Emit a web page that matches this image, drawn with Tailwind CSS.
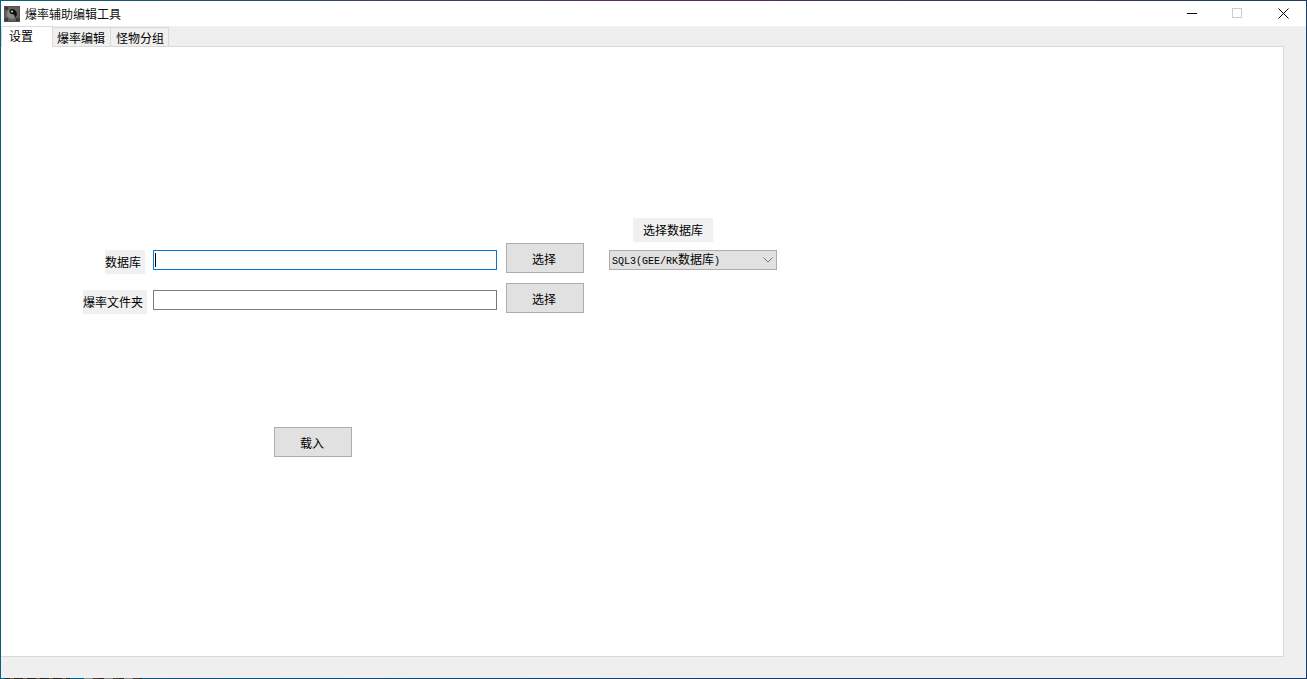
<!DOCTYPE html>
<html lang="zh-CN">
<head>
    <meta charset="UTF-8">
    <title>爆率辅助编辑工具</title>
    <script src="https://cdn.jsdelivr.net/npm/@tailwindcss/browser@4"></script>
</head>
<body class="w-[1307px] h-[679px] overflow-hidden">
    <!-- Window frame -->
    <div class="w-full h-full p-px relative bg-[linear-gradient(90deg,#0b5f7a,#1d3b63_50%,#1b3a66)] font-['Noto_Sans_CJK_SC',sans-serif] text-[12px] leading-[16px] text-black">
        <!-- Frame edge tints -->
        <div class="absolute left-0 top-0 w-full h-px bg-[linear-gradient(90deg,#0b5f7a,#5b2a68_50%,#1b3a66)]"></div>
        <div class="absolute left-[5px] bottom-0 w-[65px] h-px bg-[repeating-linear-gradient(90deg,#2a2a2a_0_5px,#6d5a48_5px_9px,#222_9px_13px)]"></div>
        <div class="absolute left-[84px] bottom-0 w-[58px] h-px bg-[repeating-linear-gradient(90deg,#8a8a8a_0_9px,#4a3c38_9px_15px,#2a2a2a_15px_20px)]"></div>
        <div class="w-full h-full flex flex-col bg-[#efefef]">
            <!-- Title bar -->
            <div class="h-[25px] shrink-0 bg-white flex items-center relative">
                <svg class="ml-[3px] w-4 h-4 mt-[1px]" viewBox="0 0 16 16">
                    <rect width="16" height="16" fill="#505155"/>
                    <rect x="1" y="1" width="14" height="14" fill="#63625f"/>
                    <path d="M1 1h3v3H1zM12 12h3v3h-3zM1 12h3v3H1z" fill="#3c3c40"/>
                    <path d="M3 8a5 5 0 0 1 5-5a5 5 0 0 1 5 5a5 5 0 0 1-5 5a5 5 0 0 1-5-5z" fill="#8b8a88"/>
                    <path d="M8 3a5 5 0 0 1 5 5a5 5 0 0 1-2 4c0-3-1-3.5-3-4a2.5 2.5 0 0 1-2.5-2A2.6 2.6 0 0 1 8 3z" fill="#0e0e0e"/>
                    <circle cx="8" cy="5.5" r="1" fill="#d8d8d8"/>
                </svg>
                <span class="ml-[5px] text-[#111]">爆率辅助编辑工具</span>
                <!-- Window controls -->
                <svg class="absolute left-[1186px] top-[12px] w-[10px] h-px" viewBox="0 0 10 1"><rect width="10" height="1" fill="#000"/></svg>
                <svg class="absolute left-[1231px] top-[7px] w-[10px] h-[10px]" viewBox="0 0 10 10"><rect x=".5" y=".5" width="9" height="9" fill="none" stroke="#ccc"/></svg>
                <svg class="absolute left-[1277px] top-[7px] w-[11px] h-[11px]" viewBox="0 0 11 11"><path d="M.5.5l10 10M10.5.5l-10 10" fill="none" stroke="#000"/></svg>
            </div>
            <!-- Tabs -->
            <div class="h-[20px] shrink-0 flex items-end relative z-10">
                <div class="w-[52px] h-[21px] bg-white border-t border-l border-r border-[#d9d9d9] pl-[7px] pt-px mb-[-1px]">设置</div>
                <div class="w-[58px] h-[19px] bg-[#f0f0f0] border-t border-r border-[#d9d9d9] pl-[4px] pt-[2px]">爆率编辑</div>
                <div class="w-[58px] h-[19px] bg-[#f0f0f0] border-t border-r border-[#d9d9d9] pl-[5px] pt-[2px]">怪物分组</div>
            </div>
            <!-- Tab page -->
            <div class="w-[1283px] h-[611px] shrink-0 bg-white border border-[#d9d9d9] border-l-0 pt-[171px]">
                <div class="h-[24px] ml-[632px] w-[80px] bg-[#f0f0f0] flex items-center justify-center">选择数据库</div>
                <!-- Database row -->
                <div class="h-[40px] mt-px flex items-start">
                    <div class="ml-[104px] mt-[7px] w-[40px] h-[24px] bg-[#f0f0f0] flex items-center">数据库</div>
                    <div class="ml-[8px] mt-[7px] w-[344px] h-[20px] border border-[#0078d7] flex items-center pl-[1px]"><div class="w-px h-[14px] bg-black"></div></div>
                    <button class="ml-[9px] w-[78px] h-[30px] bg-[#e1e1e1] border border-[#adadad] pr-[2px] pt-[2px]">选择</button>
                    <div class="ml-[25px] mt-[7px] w-[168px] h-[20px] bg-[#e1e1e1] border border-[#adadad] flex items-center pl-[2px] relative">
                        <span class="font-['Liberation_Mono','Noto_Sans_CJK_SC',monospace] text-[10px]">SQL3(GEE/RK<span class="font-['Noto_Sans_CJK_SC',sans-serif] text-[12px]">数据库</span>)</span>
                        <svg class="absolute right-[3px] top-[6px] w-[10px] h-[6px]" viewBox="0 0 10 6"><path d="M.5.5L5 5L9.5.5" fill="none" stroke="#777"/></svg>
                    </div>
                </div>
                <!-- Drop folder row -->
                <div class="h-[40px] flex items-start">
                    <div class="ml-[82px] mt-[7px] w-[64px] h-[24px] bg-[#f0f0f0] flex items-center">爆率文件夹</div>
                    <div class="ml-[6px] mt-[7px] w-[344px] h-[20px] border border-[#7a7a7a]"></div>
                    <button class="ml-[9px] w-[78px] h-[30px] bg-[#e1e1e1] border border-[#adadad] pr-[2px] pt-[2px]">选择</button>
                </div>
                <button class="ml-[273px] mt-[104px] w-[78px] h-[30px] bg-[#e1e1e1] border border-[#adadad] pr-[2px] pt-[2px] block">载入</button>
            </div>
        </div>
    </div>
</body>
</html>
